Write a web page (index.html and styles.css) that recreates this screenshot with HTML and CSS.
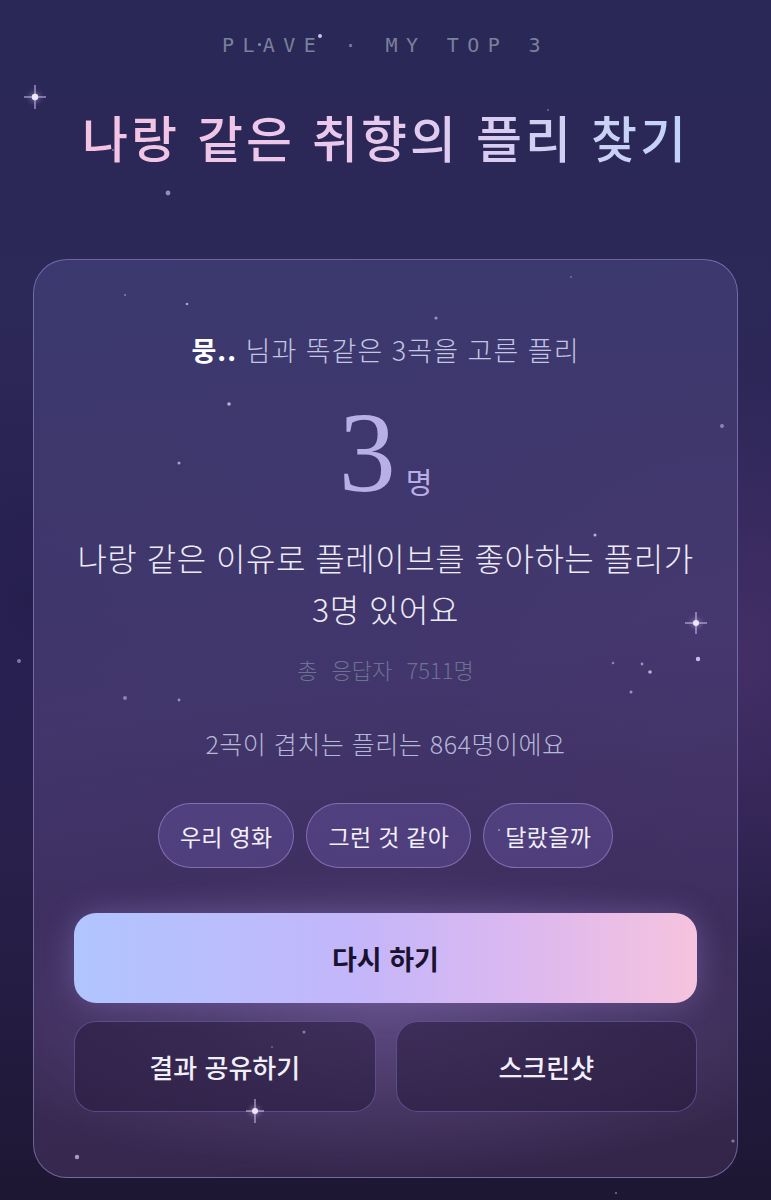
FILE: index.html
```html
<!DOCTYPE html>
<html lang="ko">
<head>
<meta charset="utf-8">
<title>PLAVE · MY TOP 3</title>
<link rel="stylesheet" href="styles.css">
</head>
<body>
<div class="page">
  <svg class="stars" width="771" height="1200" viewBox="0 0 771 1200" aria-hidden="true">
    <g class="sparkle">
      <g transform="translate(35 97)"><line x1="-11" y1="0" x2="11" y2="0"/><line x1="0" y1="-12" x2="0" y2="12"/><circle r="3.2"/></g>
      <g transform="translate(696 623)"><line x1="-11" y1="0" x2="11" y2="0"/><line x1="0" y1="-11" x2="0" y2="11"/><circle r="3"/></g>
      <g transform="translate(255 1111)"><line x1="-9" y1="0" x2="9" y2="0"/><line x1="0" y1="-12" x2="0" y2="12"/><circle r="3"/></g>
    </g>
    <g class="dots">
      <circle cx="168" cy="193" r="2.4" opacity="0.6"/>
      <circle cx="113" cy="150" r="1" opacity="0.5"/>
      <circle cx="548" cy="110" r="1" opacity="0.4"/>
      <circle cx="125" cy="295" r="1" opacity="0.5"/>
      <circle cx="187" cy="304" r="1.3" opacity="0.7"/>
      <circle cx="436" cy="318" r="1.6" opacity="0.6"/>
      <circle cx="571" cy="277" r="0.9" opacity="0.4"/>
      <circle cx="229" cy="404" r="1.8" opacity="0.8"/>
      <circle cx="179" cy="463" r="1.5" opacity="0.7"/>
      <circle cx="595" cy="535" r="1.5" opacity="0.8"/>
      <circle cx="722" cy="426" r="2" opacity="0.5"/>
      <circle cx="698" cy="659" r="2.2" opacity="0.9"/>
      <circle cx="613" cy="663" r="1.3" opacity="0.5"/>
      <circle cx="642" cy="664" r="1.4" opacity="0.6"/>
      <circle cx="650" cy="672" r="1.8" opacity="0.8"/>
      <circle cx="631" cy="692" r="1.5" opacity="0.6"/>
      <circle cx="19" cy="661" r="2" opacity="0.5"/>
      <circle cx="125" cy="698" r="2" opacity="0.5"/>
      <circle cx="179" cy="700" r="1.4" opacity="0.6"/>
      <circle cx="499" cy="830" r="1" opacity="0.6"/>
      <circle cx="304" cy="1032" r="1.5" opacity="0.5"/>
      <circle cx="272" cy="1047" r="0.9" opacity="0.4"/>
      <circle cx="77" cy="1157" r="2.2" opacity="0.7"/>
      <circle cx="733" cy="1141" r="1.6" opacity="0.5"/>
      <circle cx="616" cy="1193" r="1" opacity="0.5"/>
    </g>
  </svg>

  <header class="hero">
    <p class="brand">PL<span class="brand-mid"></span>AVE<span class="brand-dot"></span> · MY TOP 3</p>
    <h1 class="title">나랑 같은 취향의 플리 찾기</h1>
  </header>

  <section class="card">
    <p class="match"><strong>뭉..</strong> 님과 똑같은 3곡을 고른 플리</p>
    <div class="count"><span class="num">3</span><span class="unit">명</span></div>
    <p class="desc">나랑 같은 이유로 플레이브를 좋아하는 플리가<br>3명 있어요</p>
    <p class="total">총 응답자 7511명</p>
    <p class="overlap">2곡이 겹치는 플리는 864명이에요</p>
    <div class="chips">
      <span class="chip">우리 영화</span>
      <span class="chip">그런 것 같아</span>
      <span class="chip">달랐을까</span>
    </div>
    <button class="btn btn-primary" type="button">다시 하기</button>
    <div class="btn-row">
      <button class="btn btn-secondary" type="button">결과 공유하기</button>
      <button class="btn btn-secondary" type="button">스크린샷</button>
    </div>
  </section>
</div>
</body>
</html>
```

FILE: styles.css
```css
* { box-sizing: border-box; }

html, body {
  margin: 0;
  padding: 0;
}

body {
  width: 771px;
  min-height: 1200px;
  font-family: "Noto Sans CJK KR", "Noto Sans", sans-serif;
  background:
    radial-gradient(ellipse 60% 35% at 95% 55%, rgba(85, 55, 115, 0.55), rgba(85, 55, 115, 0) 70%),
    radial-gradient(ellipse 50% 30% at 5% 50%, rgba(30, 25, 70, 0.5), rgba(30, 25, 70, 0) 70%),
    linear-gradient(180deg, #2a2857 0%, #2c2858 25%, #2d2456 55%, #261d45 80%, #1d1733 100%);
  color: #ecebf6;
}

.page {
  position: relative;
  width: 771px;
  height: 1200px;
  overflow: hidden;
}

.stars {
  position: absolute;
  left: 0;
  top: 0;
  pointer-events: none;
  z-index: 2;
}

.sparkle line {
  stroke: rgba(215, 200, 255, 0.75);
  stroke-width: 1.3;
}

.sparkle circle {
  fill: #efe6ff;
  filter: drop-shadow(0 0 3px rgba(220, 200, 255, 0.9));
}

.dots circle {
  fill: #d8cff2;
}

/* Header */
.hero {
  text-align: center;
  padding-top: 33px;
}

.brand {
  margin: 0;
  font-family: "DejaVu Sans Mono", "Liberation Mono", monospace;
  font-size: 20px;
  line-height: 24px;
  letter-spacing: 8.4px;
  font-weight: 400;
  color: #7b809c;
}

.brand-mid,
.brand-dot {
  display: inline-block;
  position: relative;
  width: 0;
  height: 0;
}

.brand-mid::after {
  content: "";
  position: absolute;
  left: -5px;
  top: -9px;
  width: 3px;
  height: 3px;
  border-radius: 50%;
  background: #8a8ea8;
}

.brand-dot::after {
  content: "";
  position: absolute;
  left: -6px;
  top: -18px;
  width: 4px;
  height: 4px;
  border-radius: 50%;
  background: #cdbfe6;
}

.title {
  display: inline-block;
  margin: 51px 0 0;
  font-size: 50px;
  line-height: 56px;
  font-weight: 500;
  letter-spacing: 3px;
  background: linear-gradient(90deg, #f5c3e2 0%, #e9c8ec 45%, #c1d3f8 100%);
  -webkit-background-clip: text;
  background-clip: text;
  color: transparent;
}

/* Card */
.card {
  margin: 95px 33px 0;
  padding: 0 40px 65px;
  border: 1.5px solid rgba(160, 150, 215, 0.55);
  border-radius: 34px;
  text-align: center;
  background:
    radial-gradient(ellipse 62% 17% at 50% 83%, rgba(125, 100, 165, 0.5), rgba(125, 100, 165, 0) 100%),
    linear-gradient(172deg, rgba(62, 60, 115, 0.85) 0%, rgba(70, 58, 112, 0.85) 45%, rgba(68, 50, 100, 0.8) 72%, rgba(55, 40, 75, 0.85) 100%);
}

.match {
  margin: 72px 0 0;
  font-size: 27px;
  line-height: 36px;
  font-weight: 300;
  letter-spacing: 1px;
  color: #c4c6e2;
}

.match strong {
  font-weight: 700;
  color: #ffffff;
}

.count {
  margin-top: 17px;
  font-size: 114px;
  line-height: 1;
  height: 114px;
}

.num {
  font-family: "Liberation Serif", "DejaVu Serif", serif;
  font-size: 114px;
  font-weight: 400;
  color: #b8afe6;
}

.unit {
  display: inline-block;
  margin-left: 10px;
  font-size: 29px;
  line-height: 1;
  vertical-align: -3px;
  color: #b8afe6;
}

.desc {
  margin: 33px 0 0;
  font-size: 32px;
  line-height: 51px;
  font-weight: 300;
  letter-spacing: 0.5px;
  color: #ecebf6;
}

.total {
  margin: 20px 0 0;
  font-size: 22px;
  line-height: 30px;
  font-weight: 300;
  word-spacing: 8px;
  color: #6d7294;
}

.overlap {
  margin: 42px 0 0;
  font-size: 25px;
  line-height: 34px;
  font-weight: 300;
  letter-spacing: 0.5px;
  color: #b5b8d8;
}

.chips {
  margin-top: 43px;
  display: flex;
  justify-content: center;
  gap: 12px;
}

.chip {
  display: flex;
  align-items: center;
  height: 65px;
  padding: 0 21px;
  border-radius: 33px;
  border: 1.5px solid rgba(175, 155, 230, 0.5);
  background: rgba(105, 85, 165, 0.4);
  font-size: 23px;
  font-weight: 400;
  letter-spacing: 0.3px;
  color: #f2f0fa;
}

.btn {
  display: flex;
  align-items: center;
  justify-content: center;
  width: 100%;
  font-family: "Noto Sans CJK KR", "Noto Sans", sans-serif;
  cursor: pointer;
}

.btn-primary {
  margin-top: 45px;
  height: 90px;
  border: none;
  border-radius: 22px;
  background: linear-gradient(90deg, #b0c5ff 0%, #c3b6fa 45%, #dcb8ef 72%, #f6c3de 100%);
  box-shadow: 0 0 30px rgba(190, 170, 255, 0.25);
  font-size: 27px;
  font-weight: 700;
  color: #1a1330;
}

.btn-row {
  margin-top: 18px;
  display: grid;
  grid-template-columns: 1fr 1fr;
  gap: 20px;
}

.btn-secondary {
  height: 91px;
  border-radius: 22px;
  border: 1.5px solid rgba(120, 108, 190, 0.55);
  background: rgba(38, 26, 60, 0.55);
  font-size: 26px;
  font-weight: 500;
  color: #f1eff9;
}
```
